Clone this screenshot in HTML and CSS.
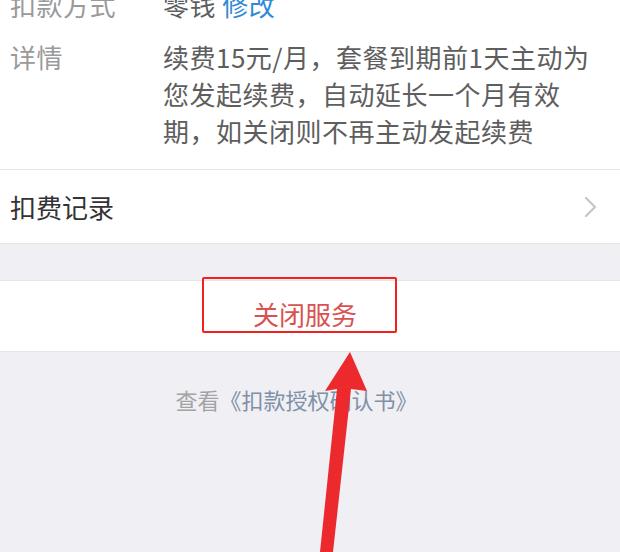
FILE: index.html
```html
<!DOCTYPE html>
<html lang="zh-CN">
<head>
  <meta charset="UTF-8">
  <meta name="viewport" content="width=device-width, initial-scale=1.0">
  <title>自动续费</title>
  <link rel="stylesheet" href="styles.css">
</head>
<body>

  <div class="page">
    <!-- Payment info -->
    <div class="info">
      <div class="field">
        <span class="label">扣款方式</span>
        <span class="value">零钱 <a class="edit">修改</a></span>
      </div>
      <div class="field">
        <span class="label">详情</span>
        <span class="value">续费15元/月，套餐到期前1天主动为您发起续费，自动延长一个月有效期，如关闭则不再主动发起续费</span>
      </div>
    </div>

    <div class="record">
      <span>扣费记录</span>
      <svg class="chevron" width="14" height="22" viewBox="0 0 14 22">
        <path d="M2 2 L11 11 L2 20" fill="none" stroke="#c7c7cc" stroke-width="2.4" stroke-linecap="round" stroke-linejoin="round"/>
      </svg>
    </div>

    <div class="close">关闭服务</div>

    <p class="agreement">查看<a>《扣款授权确认书》</a></p>

    <!-- Annotation drawn over the screenshot -->
    <div class="mark"></div>
    <svg class="arrow" width="620" height="552" viewBox="0 0 620 552">
      <polygon points="350,352 367,391 351,389 333,552 320,552 337,389 325,391" fill="#ec2a2e"/>
    </svg>
  </div>

</body>
</html>
```

FILE: styles.css
```css
/* Basic reset */
* {
  box-sizing: border-box;
  margin: 0;
  padding: 0;
}

body {
  font-family: 'Noto Sans CJK SC', 'Noto Sans', sans-serif;
  background-color: #efeff4;
  width: 620px;
  height: 552px;
  overflow: hidden;
}

.page {
  position: relative;
  display: flow-root;
  height: 552px;
}

.info {
  background-color: #fff;
  margin-top: -14px;
  padding: 0 10px 20px;
  border-bottom: 1px solid #e6e6e9;
  display: flex;
  flex-direction: column;
  gap: 15px;
}

.field {
  display: grid;
  grid-template-columns: 153px 1fr;
  font-size: 26px;
  line-height: 37px;
  letter-spacing: 0.5px;
}

.label {
  color: #9a9a9a;
}

.value {
  color: #5e5e5e;
}

.edit {
  color: #2f8ad6;
}

.record {
  background-color: #fff;
  height: 74px;
  padding: 0 22px 0 10px;
  display: flex;
  align-items: center;
  justify-content: space-between;
  font-size: 26px;
  color: #333;
  border-bottom: 1px solid #e6e6e9;
}

.close {
  margin-top: 36px;
  background-color: #fff;
  height: 72px;
  display: flex;
  align-items: center;
  justify-content: center;
  padding: 0 10px 6px 0;
  font-size: 26px;
  color: #d9524f;
  border-top: 1px solid #e6e6e9;
  border-bottom: 1px solid #e6e6e9;
}

.agreement {
  margin-top: 32px;
  padding-right: 27px;
  text-align: center;
  font-size: 22px;
  line-height: 30px;
  color: #a3a3a6;
}

.agreement a {
  color: #8090a8;
}

.mark {
  position: absolute;
  left: 202px;
  top: 277px;
  width: 195px;
  height: 56px;
  border: 2px solid #f2201e;
  border-radius: 2px;
}

.arrow {
  position: absolute;
  left: 0;
  top: 0;
}
```
